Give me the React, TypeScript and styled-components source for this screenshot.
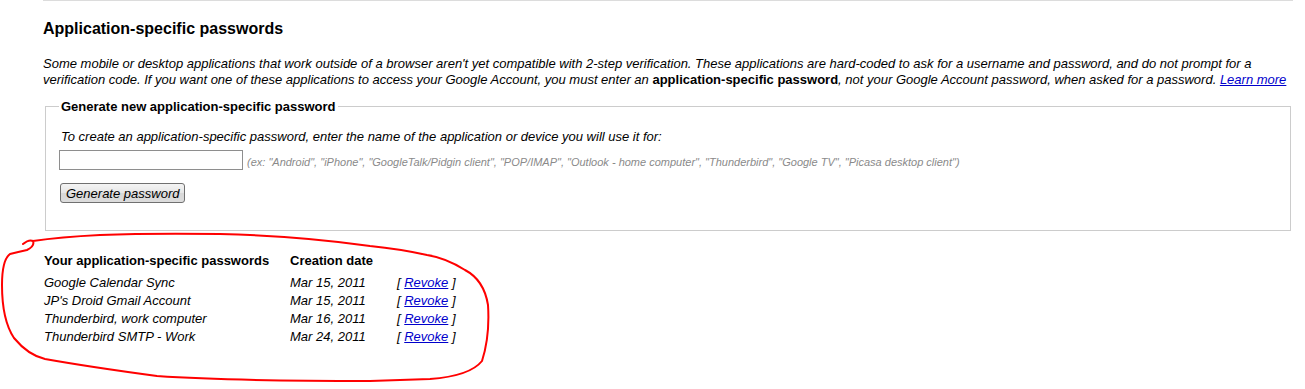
import styled, { createGlobalStyle } from "styled-components";

const GlobalStyle = createGlobalStyle`
  body {
    margin: 0;
    background: #fff;
    font-family: "Liberation Sans", Arial, sans-serif;
    color: #000;
  }
`;

const Page = styled.div`
  position: relative;
  width: 1305px;
  height: 389px;
  overflow: hidden;
`;

const Section = styled.div`
  margin-left: 43px;
  width: 1250px;
  border-top: 1px solid #dcdcdc;
`;

const Title = styled.h2`
  margin: 19px 0 0;
  font-size: 16px;
  line-height: 18px;
  font-weight: bold;
`;

const Intro = styled.p`
  margin: 18px 0 0;
  font-size: 13px;
  line-height: 16px;
  font-style: italic;
`;

const Strong = styled.b`
  font-style: normal;
`;

const Link = styled.a`
  color: #0000cc;
  text-decoration: underline;
  cursor: pointer;
`;

const Box = styled.fieldset`
  margin: 11px 2px 0;
  padding: 15px 13px 27px;
  border: 1px solid #cccccc;
  min-width: 0;
`;

const Legend = styled.legend`
  padding: 0 2px;
  margin-left: 0;
  font-size: 13px;
  line-height: 15px;
  font-weight: bold;
`;

const Help = styled.div`
  font-size: 13px;
  line-height: 15px;
  font-style: italic;
  padding-left: 2px;
`;

const InputRow = styled.div`
  display: flex;
  align-items: center;
  gap: 4px;
  margin-top: 6px;
`;

const NameInput = styled.input`
  box-sizing: border-box;
  width: 184px;
  height: 20px;
  margin: 0;
  border: 1px solid #8e8e8e;
  font: 13px "Liberation Sans", Arial, sans-serif;
`;

const Hint = styled.span`
  font-size: 11px;
  font-style: italic;
  color: #8a8a8a;
  padding-top: 3px;
`;

const Button = styled.button`
  display: block;
  box-sizing: border-box;
  margin: 13px 0 0 1px;
  height: 20px;
  padding: 0 5px;
  border: 1px solid #707070;
  border-radius: 3px;
  background: linear-gradient(#f4f4f4, #e6e6e6 50%, #d8d8d8 51%, #dcdcdc);
  font: italic 13px "Liberation Sans", Arial, sans-serif;
  color: #000;
`;

const Table = styled.div`
  display: grid;
  grid-template-columns: 246px 107px auto;
  grid-template-rows: 22px;
  grid-auto-rows: 18px;
  margin: 22px 0 0 1px;
  font-size: 13px;
  line-height: 16px;
`;

const Head = styled.div`
  font-weight: bold;
`;

const Cell = styled.div`
  font-style: italic;
`;

const Outline = styled.svg`
  position: absolute;
  left: 0;
  top: 0;
  pointer-events: none;
`;

const rows = [
  { name: "Google Calendar Sync", date: "Mar 15, 2011" },
  { name: "JP's Droid Gmail Account", date: "Mar 15, 2011" },
  { name: "Thunderbird, work computer", date: "Mar 16, 2011" },
  { name: "Thunderbird SMTP - Work", date: "Mar 24, 2011" },
];

export default function App() {
  return (
    <Page>
      <GlobalStyle />
      <Section>
        <Title>Application-specific passwords</Title>
        <Intro>
          Some mobile or desktop applications that work outside of a browser aren't yet compatible
          with 2-step verification. These applications are hard-coded to ask for a username and
          password, and do not prompt for a verification code. If you want one of these
          applications to access your Google Account, you must enter an{" "}
          <Strong>application-specific password</Strong>, not your Google Account password, when
          asked for a password. <Link>Learn more</Link>
        </Intro>
        <Box>
          <Legend>Generate new application-specific password</Legend>
          <Help>
            To create an application-specific password, enter the name of the application or
            device you will use it for:
          </Help>
          <InputRow>
            <NameInput type="text" />
            <Hint>
              (ex: "Android", "iPhone", "GoogleTalk/Pidgin client", "POP/IMAP", "Outlook - home
              computer", "Thunderbird", "Google TV", "Picasa desktop client")
            </Hint>
          </InputRow>
          <Button type="button">Generate password</Button>
        </Box>
        <Table>
          <Head>Your application-specific passwords</Head>
          <Head>Creation date</Head>
          <Head />
          {rows.map((r) => (
            <>
              <Cell>{r.name}</Cell>
              <Cell>{r.date}</Cell>
              <Cell>
                [ <Link>Revoke</Link> ]
              </Cell>
            </>
          ))}
        </Table>
      </Section>
      <Outline width="1305" height="389" viewBox="0 0 1305 389">
        <path
          d="M23 244 Q29 239 33 241 Q35 246 27 250 Q18 252 10 254 Q2 260 2 285 Q2 320 14 338 Q28 355 45 359 Q90 367 157 376 Q230 381 370 381 L430 379 Q470 376 482 361 Q490 336 488 305 Q484 280 465 270 Q446 258 427 255 Q400 249 370 246 Q300 236 220 234 Q150 233 100 235 Q60 237 33 241"
          fill="none"
          stroke="#ff0000"
          strokeWidth="2"
          strokeLinecap="round"
          strokeLinejoin="round"
        />
      </Outline>
    </Page>
  );
}
